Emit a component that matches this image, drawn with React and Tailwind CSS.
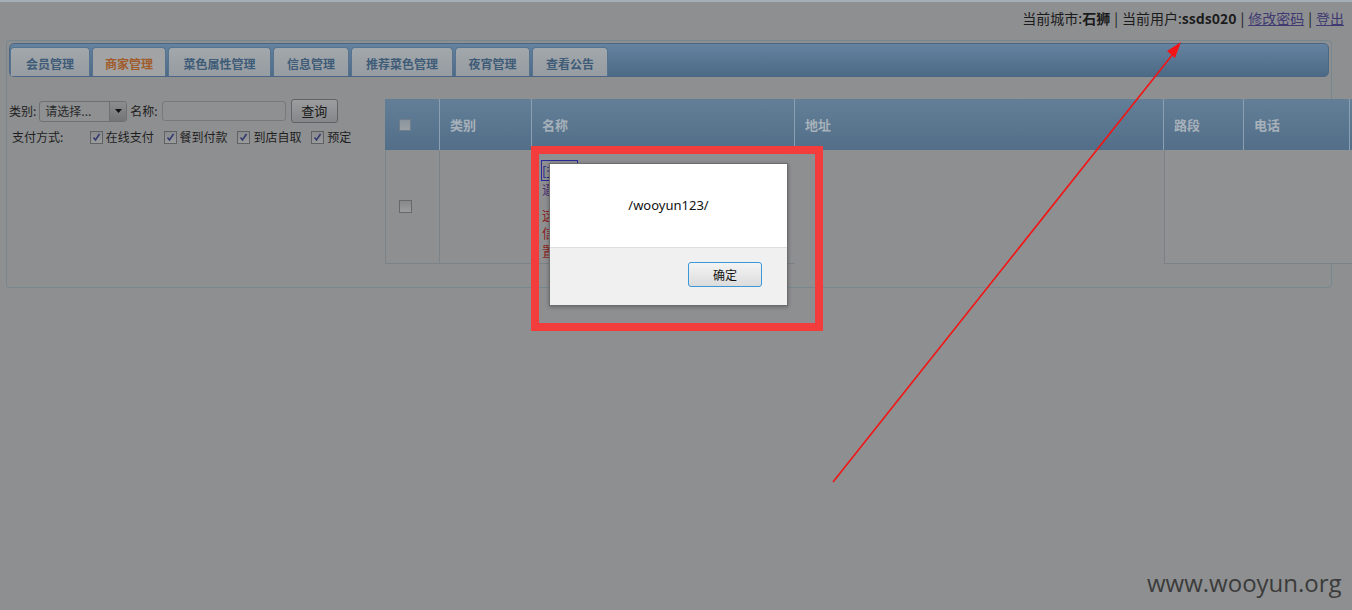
import React from "react";

// tabs across the top bar, widths read off the screenshot
const tabs = [
  { label: "会员管理", w: "w-[80px]" },
  { label: "商家管理", w: "w-[74px]", active: true },
  { label: "菜色属性管理", w: "w-[103px]" },
  { label: "信息管理", w: "w-[76px]" },
  { label: "推荐菜色管理", w: "w-[102px]" },
  { label: "夜宵管理", w: "w-[75px]" },
  { label: "查看公告", w: "w-[76px]" },
];

const payTypes = ["在线支付", "餐到付款", "到店自取", "预定"];

// table columns (header)
const columns = [
  { label: "类别", w: "w-[92px]" },
  { label: "名称", w: "w-[263px]" },
  { label: "地址", w: "w-[369px]" },
  { label: "路段", w: "w-[80px]" },
  { label: "电话", w: "w-[106px]" },
  { label: "", w: "w-[60px]" },
];

function CheckBox({ checked }) {
  return (
    <span className="flex h-[13px] w-[13px] shrink-0 items-center justify-center border border-[#5f6163] bg-gradient-to-b from-[#8a8b8d] to-[#9a9b9d]">
      {checked && (
        <svg width="9" height="9" viewBox="0 0 9 9">
          <path d="M1.5 4.5 L3.5 7 L7.5 1" fill="none" stroke="#333a6e" strokeWidth="1.6" />
        </svg>
      )}
    </span>
  );
}

function Tab({ label, w, active }) {
  return (
    <div
      className={
        "flex h-[29px] items-center justify-center rounded-t-[4px] border border-b-0 border-[#56738f] pt-[3px] text-[12px] font-bold " +
        w +
        (active
          ? " bg-[#a2a3a4] text-[#a15b2b]"
          : " bg-gradient-to-b from-[#a2a7ab] to-[#969ca1] text-[#3e5b78]")
      }
    >
      {label}
    </div>
  );
}

function FilterPanel() {
  return (
    <div className="w-[376px] shrink-0 text-[12px] text-[#1e1e1e]">
      {/* row 1: category / name / search */}
      <div className="flex h-[24px] items-center">
        <span>类别:</span>
        <div className="ml-[3px] flex h-[21px] w-[88px] items-center rounded-[3px] border border-[#6f7072] bg-[#8f9092]">
          <span className="flex-1 pl-[5px] text-[#2a2a2a]">请选择...</span>
          <span className="flex h-full w-[17px] items-center justify-center rounded-r-[2px] border-l border-[#6f7072] bg-gradient-to-b from-[#8c8d8f] to-[#747577]">
            <svg width="7" height="4" viewBox="0 0 7 4">
              <path d="M0 0 H7 L3.5 4 Z" fill="#111" />
            </svg>
          </span>
        </div>
        <span className="ml-[3px]">名称:</span>
        <div className="ml-[4px] h-[20px] w-[124px] rounded-[3px] border border-[#78797b] bg-[#8f9092]" />
        <button className="ml-[5px] h-[24px] w-[47px] rounded-[3px] border border-[#626365] bg-gradient-to-b from-[#9c9d9f] to-[#86878a] text-[13px] text-[#1a1a1a]">
          查询
        </button>
      </div>

      {/* row 2: payment types */}
      <div className="mt-[7px] flex h-[14px] items-center">
        <span className="w-[82px] pl-[3px]">支付方式:</span>
        {payTypes.map((p) => (
          <div key={p} className="flex w-[75px] items-center">
            <CheckBox checked />
            <span className="ml-[3px]">{p}</span>
          </div>
        ))}
      </div>
    </div>
  );
}

function ShopTable() {
  return (
    <div className="w-[1030px] shrink-0">
      {/* header */}
      <div className="flex h-[51px] bg-gradient-to-b from-[#637f98] to-[#536e88] text-[13px] font-bold text-[#a7b1ba]">
        <div className="flex w-[54px] items-center pl-[14px]">
          <span className="h-[12px] w-[12px] border border-[#6f7e8a] bg-gradient-to-b from-[#8a949c] to-[#9aa1a6]" />
        </div>
        {columns.map((c, i) => (
          <div key={i} className={"flex items-center border-l border-[#8ca0b2] pl-[10px] " + c.w}>
            {c.label}
          </div>
        ))}
      </div>

      {/* the single row; most of the name cell sits under the alert */}
      <div className="flex h-[114px] border-l border-[#7b8388]">
        <div className="flex w-[54px] items-center border-b border-r border-[#7b8388] pl-[13px]">
          <span className="h-[13px] w-[13px] border border-[#66686a] bg-gradient-to-b from-[#86888a] to-[#9c9d9f]" />
        </div>
        <div className="w-[92px] border-b border-r border-[#7b8388]" />
        <div className="w-[263px] border-b border-[#7b8388] pl-[10px] pt-[12px] text-[13px] leading-[18px]">
          <a className="text-[#1f1f8e] underline outline outline-1 outline-[#2a2a9a]">[查看]</a>
          <div className="text-[#4b2f6f]">逼真</div>
          <div className="mt-[8px] text-[#8a1f1f]">这是</div>
          <div className="text-[#8a1f1f]">信息</div>
          <div className="text-[#8a1f1f]">置顶</div>
        </div>
        <div className="w-[369px]" />
        <div className="w-[246px] border-b border-l border-[#7a8287] bg-[#909193]" />
      </div>
    </div>
  );
}

export default function App() {
  return (
    <div className="relative h-[610px] w-[1352px] overflow-hidden border-t-2 border-[#a5adb5] bg-[#8e8f91] font-['Noto_Sans_CJK_SC','Noto_Sans',sans-serif]">
      {/* top-right user info */}
      <div className="flex h-[38px] justify-end pr-[8px] pt-[6px] text-[14px] leading-[20px] text-[#1b1b1b]">
        <span>当前城市:</span>
        <b>石狮</b>
        <span className="px-[4px]">|</span>
        <span>当前用户:</span>
        <b>ssds020</b>
        <span className="px-[4px]">|</span>
        <a className="text-[#3f3a72] underline">修改密码</a>
        <span className="px-[4px]">|</span>
        <a className="text-[#3f3a72] underline">登出</a>
      </div>

      {/* main panel */}
      <div className="ml-[6px] mr-[20px] h-[248px] rounded-[4px] border border-[#78878f] p-[2px]">
        <div className="flex h-[34px] items-end gap-[2px] rounded-[5px] border border-[#4c6783] bg-gradient-to-b from-[#6583a0] to-[#4c6985]">
          {tabs.map((t) => (
            <Tab key={t.label} {...t} />
          ))}
        </div>

        <div className="mt-[22px] flex">
          <FilterPanel />
          <ShopTable />
        </div>
      </div>

      {/* alert dialog */}
      <div className="absolute left-[549px] top-[161px] flex h-[143px] w-[239px] flex-col border border-[#6d6d6d] bg-white shadow-[0_1px_4px_rgba(0,0,0,0.3)]">
        <div className="flex h-[83px] items-center justify-center text-[13px] text-[#111] font-['Noto_Sans',sans-serif]">
          /wooyun123/
        </div>
        <div className="flex flex-1 justify-end border-t border-[#dedede] bg-[#f0f0f0] pr-[25px] pt-[14px]">
          <button className="h-[25px] w-[74px] rounded-[3px] border border-[#3a98d8] bg-gradient-to-b from-[#f4f4f4] to-[#dcdcdc] text-[12px] text-[#111]">
            确定
          </button>
        </div>
      </div>

      {/* red annotation box */}
      <div className="absolute left-[531px] top-[144px] h-[185px] w-[292px] border-[8px] border-[#f33c3c]" />

      {/* red annotation arrow */}
      <svg className="pointer-events-none absolute left-0 top-0" width="1352" height="610" viewBox="0 0 1352 610">
        <line x1="833" y1="480" x2="1173" y2="52" stroke="#f21515" strokeWidth="1.6" />
        <polygon points="1181,40 1175,56 1167,49" fill="#f21515" />
      </svg>

      {/* watermark */}
      <div className="absolute left-[1147px] top-[566px] text-[24px] leading-[30px] text-[#3b3b3b] font-['Open_Sans',sans-serif]">
        www.wooyun.org
      </div>
    </div>
  );
}
